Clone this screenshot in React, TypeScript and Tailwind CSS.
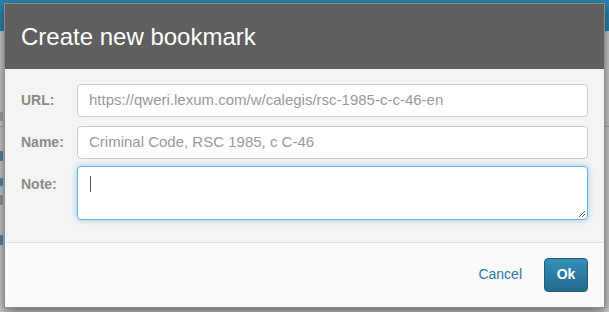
import React from "react";

function PageBehind() {
  // faded page under the dialog; only slivers of it show at the edges
  return (
    <div className="absolute inset-0 bg-[#cfcfcf] flex flex-col">
      <div className="h-[31px] bg-[#2b86ad] shrink-0" />
      <div className="flex flex-col">
        <div className="h-[81px]" />
        <div className="ml-0 w-[3px] h-[9px] bg-[#8a8a8a] opacity-60" />
        <div className="h-[5px]" />
        <div className="h-px bg-[#a9a9a9]" />
        <div className="h-[24px]" />
        <div className="w-[3px] h-[10px] bg-[#2b6f92] opacity-70" />
        <div className="h-[12px]" />
        <div className="w-[4px] h-[18px] bg-[#b9d3de] flex items-center">
          <div className="w-[3px] h-[8px] bg-[#2b6f92] opacity-70" />
        </div>
        <div className="h-[4px]" />
        <div className="w-[3px] h-[10px] bg-[#777] opacity-60" />
        <div className="h-[30px]" />
        <div className="w-[3px] h-[10px] bg-[#2b6f92] opacity-70" />
      </div>
    </div>
  );
}

export default function App() {
  return (
    <div
      className="relative w-[609px] h-[312px] overflow-hidden"
      style={{ fontFamily: "'Liberation Sans', Arial, Helvetica, sans-serif" }}
    >
      <PageBehind />

      {/* modal dialog */}
      <div className="absolute left-[4px] top-[3px] w-[601px] h-[305px] border border-[#8c8c8c] shadow-[0_4px_12px_rgba(0,0,0,0.55)] flex flex-col overflow-hidden">
        <div className="h-[65px] shrink-0 bg-[#5f5f5f] flex items-center pl-[16px] pt-[1px]">
          <h3 className="text-[24px] text-white leading-none">Create new bookmark</h3>
        </div>

        <div className="h-[174px] shrink-0 bg-[#f4f4f4] border-b border-[#e3e3e3] pt-[15px] pl-[16px] pr-[16px] flex flex-col">
          <div className="flex items-center">
            <label className="w-[56px] shrink-0 text-[14px] font-bold text-[#8a8a8a]">URL:</label>
            <div className="flex-1 h-[33px] bg-white border border-[#cccccc] rounded-[4px] flex items-center pl-[11px] text-[15px] text-[#999]">
              https://qweri.lexum.com/w/calegis/rsc-1985-c-c-46-en
            </div>
          </div>
          <div className="flex items-center mt-[9px]">
            <label className="w-[56px] shrink-0 text-[14px] font-bold text-[#8a8a8a]">Name:</label>
            <div className="flex-1 h-[33px] bg-white border border-[#cccccc] rounded-[4px] flex items-center pl-[11px] text-[15px] text-[#999]">
              Criminal Code, RSC 1985, c C-46
            </div>
          </div>
          <div className="flex items-start mt-[7px]">
            <label className="w-[56px] shrink-0 text-[14px] font-bold text-[#8a8a8a] pt-[8px]">Note:</label>
            <div className="relative flex-1 h-[54px] bg-white border border-[#66afe9] rounded-[4px] shadow-[0_0_6px_rgba(102,175,233,0.6)] pl-[12px] pt-[9px]">
              <div className="w-px h-[16px] bg-[#555]" />
              <svg className="absolute right-[1px] bottom-[1px]" width="9" height="9" viewBox="0 0 9 9">
                <path d="M8 2 L2 8 M8 5 L5 8" stroke="#555" strokeWidth="1" />
              </svg>
            </div>
          </div>
        </div>

        <div className="flex-1 bg-[#fafafa] flex items-center justify-end pr-[16px] gap-[22px] pb-[1px]">
          <span className="text-[14px] text-[#2a7aa3]">Cancel</span>
          <button className="w-[44px] h-[34px] rounded-[4px] border border-[#1f5d7a] bg-gradient-to-b from-[#3390b8] to-[#246a8c] text-white text-[14px] font-bold">
            Ok
          </button>
        </div>
      </div>
    </div>
  );
}
